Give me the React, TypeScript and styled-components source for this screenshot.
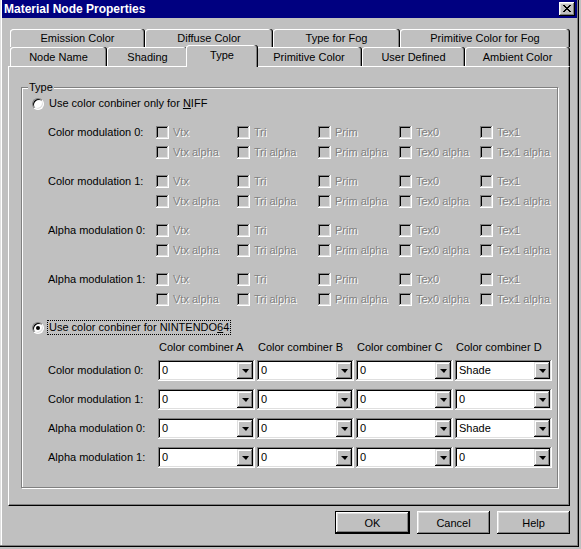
import React from 'react';
import styled, { createGlobalStyle } from 'styled-components';

const GlobalStyle = createGlobalStyle`
  html, body { margin: 0; padding: 0; background: #c0c0c0; }
  body {
    font-family: "Liberation Sans", Arial, sans-serif;
    font-size: 11px;
    color: #000;
  }
  * { box-sizing: border-box; }
`;

const Window = styled.div`
  width: 579px;
  height: 547px;
  background: #c0c0c0;
  display: flex;
  flex-direction: column;
  padding: 0 2px 2px 2px;
  box-shadow: inset -1px -1px #000, inset -2px -2px #808080, inset 1px 0 #dfdfdf, inset 2px 0 #fff;
`;

const TitleBar = styled.div`
  height: 18px;
  flex: none;
  background: #000080;
  color: #fff;
  font-weight: bold;
  font-size: 12px;
  display: flex;
  align-items: center;
  justify-content: space-between;
  padding: 0 2px 0 2px;
`;

const CloseButton = styled.div`
  width: 16px;
  height: 14px;
  background: #c0c0c0;
  display: flex;
  align-items: center;
  justify-content: center;
  box-shadow: inset -1px -1px #000, inset 1px 1px #fff, inset -2px -2px #808080, inset 2px 2px #dfdfdf;
  padding: 0 1px 1px 0;
`;

const Body = styled.div`
  flex: 1;
  padding: 11px 0 0 6px;
  display: flex;
  flex-direction: column;
`;

const TabControl = styled.div`
  width: 562px;
  display: flex;
  flex-direction: column;
`;

const TabRow = styled.div<{ $h: number }>`
  height: ${p => p.$h}px;
  display: flex;
  align-items: flex-end;
  padding-left: 2px;
`;

const Tab = styled.div<{ $w: number; $h: number; $selected?: boolean }>`
  width: ${p => p.$w}px;
  height: ${p => p.$h}px;
  flex: none;
  background: #c0c0c0;
  display: flex;
  align-items: center;
  justify-content: center;
  white-space: nowrap;
  border-radius: 3px 3px 0 0;
  box-shadow: inset -1px 0 #000, inset -2px 0 #808080, inset 1px 1px #fff;
  padding-bottom: ${p => (p.$selected ? 3 : 0)}px;
  ${p =>
    p.$selected
      ? `margin: 0 -2px -1px -2px; position: relative; z-index: 1;`
      : ''}
`;

const Panel = styled.div`
  width: 562px;
  height: 440px;
  border: 1px solid;
  border-color: #fff #000 #000 #fff;
  box-shadow: inset -1px -1px #808080;
  padding: 20px 0 0 12px;
`;

const Group = styled.div`
  position: relative;
  width: 537px;
  height: 401px;
  border: 1px solid #808080;
  box-shadow: 1px 1px 0 #fff, inset 1px 1px 0 #fff;
  padding: 9px 0 0 10px;
  display: flex;
  flex-direction: column;
`;

const Legend = styled.span`
  position: absolute;
  top: -7px;
  left: 6px;
  background: #c0c0c0;
  padding: 0 1px;
  line-height: 13px;
`;

const RadioRow = styled.div<{ $mt?: number }>`
  height: 13px;
  display: flex;
  align-items: center;
  gap: 3px;
  margin-top: ${p => p.$mt ?? 0}px;
`;

const Radio = styled.span<{ $checked?: boolean }>`
  width: 12px;
  height: 12px;
  flex: none;
  border-radius: 50%;
  background: #fff;
  border: 1px solid;
  border-color: #808080 #fff #fff #808080;
  box-shadow: inset 1px 1px #000, inset -1px -1px #dfdfdf;
  display: flex;
  align-items: center;
  justify-content: center;
  margin-right: 1px;
  &::after {
    content: '';
    width: 4px;
    height: 4px;
    border-radius: 50%;
    background: ${p => (p.$checked ? '#000' : 'transparent')};
  }
`;

const RadioLabel = styled.span<{ $focused?: boolean }>`
  line-height: 13px;
  padding: 0 1px;
  white-space: nowrap;
  outline: ${p => (p.$focused ? '1px dotted #000' : 'none')};
  outline-offset: 0;
`;

const Section = styled.div<{ $mt: number }>`
  margin-left: 16px;
  margin-top: ${p => p.$mt}px;
  display: flex;
  flex-direction: column;
  gap: 16px;
`;

const ModBlock = styled.div`
  display: grid;
  grid-template-columns: 108px repeat(5, 81px);
  grid-auto-rows: 13px;
  row-gap: 7px;
  align-items: center;
`;

const RowLabel = styled.span`
  line-height: 13px;
  white-space: nowrap;
`;

const CheckItem = styled.label`
  display: flex;
  align-items: center;
  gap: 4px;
  white-space: nowrap;
`;

const CheckBox = styled.span`
  width: 13px;
  height: 13px;
  flex: none;
  background: #c0c0c0;
  box-shadow: inset -1px -1px #fff, inset 1px 1px #808080, inset -2px -2px #dfdfdf, inset 2px 2px #000;
`;

const DisabledText = styled.span`
  color: #808080;
  text-shadow: 1px 1px 0 #fff;
  line-height: 13px;
`;

const ComboSection = styled.div`
  margin-left: 16px;
  margin-top: 7px;
  display: flex;
  flex-direction: column;
`;

const ComboGrid = styled.div<{ $h: number; $mt: number }>`
  display: grid;
  grid-template-columns: 108px repeat(4, 97px);
  column-gap: 2px;
  height: ${p => p.$h}px;
  margin-top: ${p => p.$mt}px;
  align-items: center;
`;

const HeaderCell = styled.span`
  padding-left: 1px;
  white-space: nowrap;
  line-height: 13px;
`;

const Combo = styled.div`
  width: 97px;
  height: 21px;
  background: #fff;
  display: flex;
  align-items: center;
  padding: 2px;
  box-shadow: inset -1px -1px #fff, inset 1px 1px #808080, inset -2px -2px #dfdfdf, inset 2px 2px #000;
`;

const ComboValue = styled.span`
  flex: 1;
  padding-left: 2px;
  line-height: 13px;
`;

const DropButton = styled.span`
  width: 16px;
  height: 17px;
  flex: none;
  background: #c0c0c0;
  display: flex;
  align-items: center;
  justify-content: center;
  box-shadow: inset -1px -1px #000, inset 1px 1px #dfdfdf, inset -2px -2px #808080, inset 2px 2px #fff;
  &::after {
    content: '';
    width: 0;
    height: 0;
    border-left: 4px solid transparent;
    border-right: 3px solid transparent;
    border-top: 4px solid #000;
  }
`;

const ButtonRow = styled.div`
  width: 562px;
  margin-top: 5px;
  display: flex;
  justify-content: flex-end;
  gap: 7px;
`;

const Button = styled.div<{ $default?: boolean }>`
  width: ${p => (p.$default ? 75 : 73)}px;
  height: 23px;
  background: #c0c0c0;
  display: flex;
  align-items: center;
  justify-content: center;
  ${p =>
    p.$default
      ? `border: 1px solid #000;
         box-shadow: inset -1px -1px #000, inset 1px 1px #fff, inset -2px -2px #808080, inset 2px 2px #dfdfdf;`
      : `box-shadow: inset -1px -1px #000, inset 1px 1px #fff, inset -2px -2px #808080, inset 2px 2px #dfdfdf;`}
`;

const closePixels: [number, number, number][] = [
  [0, 0, 2], [6, 0, 2],
  [1, 1, 2], [5, 1, 2],
  [2, 2, 4],
  [3, 3, 2],
  [2, 4, 4],
  [1, 5, 2], [5, 5, 2],
  [0, 6, 2], [6, 6, 2],
];

const CloseIcon = () => (
  <svg width="8" height="7" viewBox="0 0 8 7" shapeRendering="crispEdges">
    <path d={closePixels.map(([x, y, w]) => `M${x} ${y}h${w}v1h-${w}z`).join('')} fill="#000" />
  </svg>
);

const backTabs: [string, number][] = [
  ['Emission Color', 135],
  ['Diffuse Color', 128],
  ['Type for Fog', 127],
  ['Primitive Color for Fog', 170],
];

const frontTabs: [string, number, boolean][] = [
  ['Node Name', 97, false],
  ['Shading', 81, false],
  ['Type', 72, true],
  ['Primitive Color', 106, false],
  ['User Defined', 103, false],
  ['Ambient Color', 105, false],
];

const checkCols = [
  ['Vtx', 'Vtx alpha'],
  ['Tri', 'Tri alpha'],
  ['Prim', 'Prim alpha'],
  ['Tex0', 'Tex0 alpha'],
  ['Tex1', 'Tex1 alpha'],
];

const modLabels = ['Color modulation 0:', 'Color modulation 1:', 'Alpha modulation 0:', 'Alpha modulation 1:'];

const comboValues = [
  ['0', '0', '0', 'Shade'],
  ['0', '0', '0', '0'],
  ['0', '0', '0', 'Shade'],
  ['0', '0', '0', '0'],
];

export default function App() {
  return (
    <>
      <GlobalStyle />
      <Window>
        <TitleBar>
          <span>Material Node Properties</span>
          <CloseButton>
            <CloseIcon />
          </CloseButton>
        </TitleBar>
        <Body>
          <TabControl>
            <TabRow $h={18}>
              {backTabs.map(([t, w]) => (
                <Tab key={t} $w={w} $h={18}>{t}</Tab>
              ))}
            </TabRow>
            <TabRow $h={19}>
              {frontTabs.map(([t, w, sel]) => (
                <Tab key={t} $w={w} $h={sel ? 22 : 19} $selected={sel}>{t}</Tab>
              ))}
            </TabRow>
            <Panel>
              <Group>
                <Legend>Type</Legend>
                <RadioRow>
                  <Radio />
                  <RadioLabel>Use color conbiner only for <u>N</u>IFF</RadioLabel>
                </RadioRow>
                <Section $mt={16}>
                  {modLabels.map(label => (
                    <ModBlock key={label}>
                      <RowLabel>{label}</RowLabel>
                      {checkCols.map(([a]) => (
                        <CheckItem key={a}>
                          <CheckBox />
                          <DisabledText>{a}</DisabledText>
                        </CheckItem>
                      ))}
                      <span />
                      {checkCols.map(([, b]) => (
                        <CheckItem key={b}>
                          <CheckBox />
                          <DisabledText>{b}</DisabledText>
                        </CheckItem>
                      ))}
                    </ModBlock>
                  ))}
                </Section>
                <RadioRow $mt={15}>
                  <Radio $checked />
                  <RadioLabel $focused>Use color conbiner for NINTENDO<u>6</u>4</RadioLabel>
                </RadioRow>
                <ComboSection>
                  <ComboGrid $h={13} $mt={0}>
                    <span />
                    <HeaderCell>Color combiner A</HeaderCell>
                    <HeaderCell>Color combiner B</HeaderCell>
                    <HeaderCell>Color combiner C</HeaderCell>
                    <HeaderCell>Color combiner D</HeaderCell>
                  </ComboGrid>
                  {modLabels.map((label, i) => (
                    <ComboGrid key={label} $h={21} $mt={i === 0 ? 6 : 8}>
                      <RowLabel>{label}</RowLabel>
                      {comboValues[i].map((v, j) => (
                        <Combo key={j}>
                          <ComboValue>{v}</ComboValue>
                          <DropButton />
                        </Combo>
                      ))}
                    </ComboGrid>
                  ))}
                </ComboSection>
              </Group>
            </Panel>
          </TabControl>
          <ButtonRow>
            <Button $default>OK</Button>
            <Button>Cancel</Button>
            <Button>Help</Button>
          </ButtonRow>
        </Body>
      </Window>
    </>
  );
}
